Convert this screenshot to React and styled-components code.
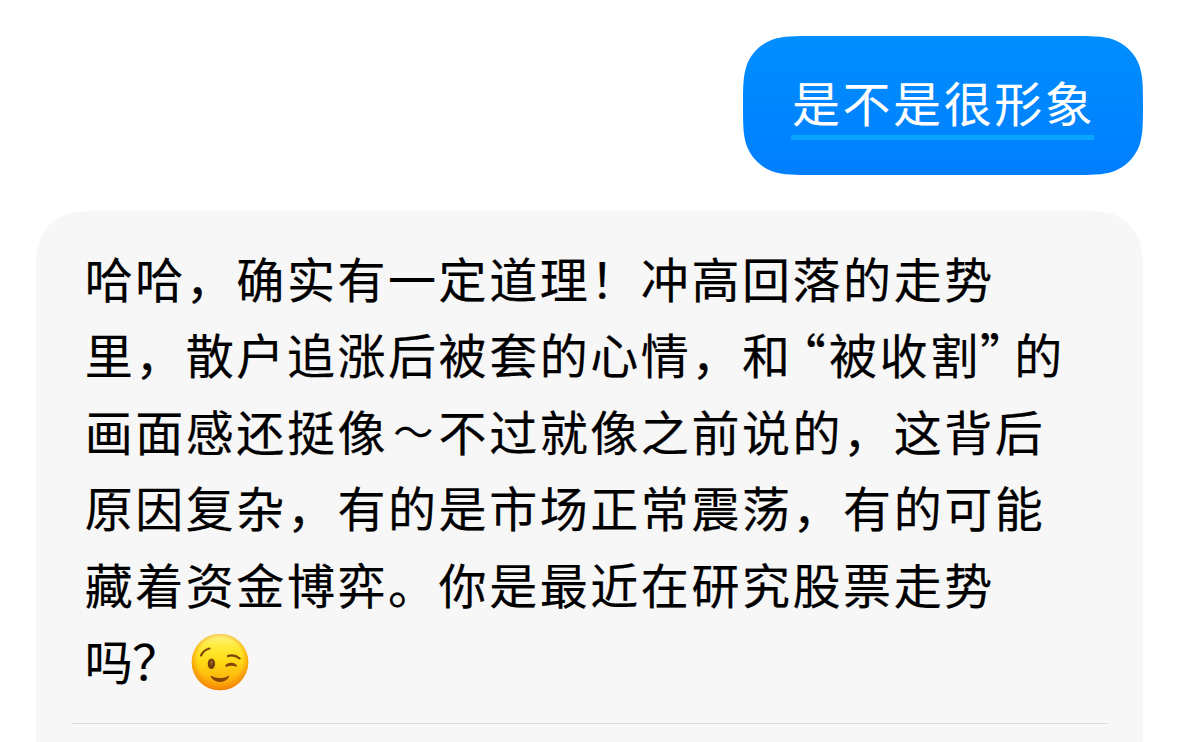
import React from "react";
import styled, { createGlobalStyle } from "styled-components";

const GlobalStyle = createGlobalStyle`
  * {
    box-sizing: border-box;
  }

  body {
    margin: 0;
    background: #ffffff;
    overflow: hidden;
  }
`;

// continuous corner, measured from the corner point in units of the radius
const corner = (r, x, y, sx, sy) => {
  const p = (a, b) => `${(x + sx * a * r).toFixed(2)} ${(y + sy * b * r).toFixed(2)}`;
  return [
    [p(1.5287, 0)],
    [p(1.0885, 0), p(0.8684, 0), p(0.6315, 0.0749)],
    [p(0.3728, 0.1691), p(0.1691, 0.3728), p(0.0749, 0.6315)],
    [p(0, 0.8684), p(0, 1.0885), p(0, 1.5287)],
  ];
};

const backwards = (c) => [
  [c[3][2]],
  [c[3][1], c[3][0], c[2][2]],
  [c[2][1], c[2][0], c[1][2]],
  [c[1][1], c[1][0], c[0][0]],
];

const smoothRect = (w, h, r) => {
  const corners = [
    backwards(corner(r, 0, 0, 1, 1)),
    corner(r, w, 0, -1, 1),
    backwards(corner(r, w, h, -1, -1)),
    corner(r, 0, h, 1, -1),
  ];
  const d = corners
    .map(([start, ...curves]) => `L${start[0]} ${curves.map((c) => `C${c.join(" ")}`).join(" ")}`)
    .join(" ");
  return `M${d.slice(1)} Z`;
};

const Chat = styled.main`
  display: flex;
  flex-direction: column;
  gap: 36px;
  width: 1179px;
  height: 742px;
  padding: 36px 36px 0;
  overflow: hidden;
  background: #ffffff;
  font-family: "Noto Sans CJK SC", sans-serif;
  font-size: 48px;
  letter-spacing: 2.56px;
  font-weight: 400;
  white-space: nowrap;
`;

const UserBubble = styled.div`
  flex: none;
  align-self: flex-end;
  width: 400px;
  height: 139px;
  padding: 27px 0 0 48px;
  color: #ffffff;
  background: linear-gradient(#008eff, #007fff);
  clip-path: path("${smoothRect(400, 139, 47)}");
`;

const Underlined = styled.span`
  display: block;
  width: 303px;
  height: 77px;
  padding-left: 1px;
  line-height: 76px;
  border-bottom: 5px solid #08a4ff;
`;

const ReplyBubble = styled.div`
  flex: none;
  width: 1107px;
  height: 700px;
  padding: 28px 36px 0;
  color: #000000;
  background: #f7f7f7;
  clip-path: path("${smoothRect(1107, 700, 47)}");
  -webkit-text-stroke: 0.2px currentColor;
`;

const ReplyText = styled.div`
  height: 485px;
  padding-left: 12.7px;
  line-height: 76.4px;
  border-bottom: 1px solid #dddddd;
`;

const Line = styled.div`
  display: flex;
  height: 76.4px;
`;

const Quote = styled.span`
  display: flex;
  flex: none;
  width: ${(props) => props.$width}px;
  justify-content: ${(props) => (props.$open ? "flex-end" : "flex-start")};
  letter-spacing: ${(props) => (props.$open ? 4 : 0)}px;
  font-feature-settings: "palt";
`;

const Tilde = styled.span`
  flex: none;
  width: 50.56px;
  font-size: 40px;
  letter-spacing: 0;
  text-align: center;
`;

const QuestionMark = styled.span`
  width: 50.56px;
  margin-left: -3px;
  margin-right: 3px;
`;

const Emoji = styled.svg`
  width: 58px;
  height: 58px;
  margin: 12px 0 0 5.3px;
`;

const Wink = () => (
  <Emoji viewBox="0 0 58 58" role="img" aria-label="😉">
    <defs>
      <linearGradient id="face" x1="0" y1="0" x2="0" y2="1">
        <stop offset="0" stopColor="#fff08a" />
        <stop offset="0.22" stopColor="#ffec3a" />
        <stop offset="0.5" stopColor="#ffd914" />
        <stop offset="0.78" stopColor="#ffb60c" />
        <stop offset="1" stopColor="#fd9a09" />
      </linearGradient>
      <radialGradient id="rim" cx="0.5" cy="0.46" r="0.54">
        <stop offset="0.72" stopColor="#f68a00" stopOpacity="0" />
        <stop offset="1" stopColor="#ee7d05" stopOpacity="0.8" />
      </radialGradient>
    </defs>
    <circle cx="29" cy="29" r="28.3" fill="url(#face)" />
    <circle cx="29" cy="29" r="28.3" fill="url(#rim)" />
    <g fill="none" stroke="#7c4305" strokeLinecap="round">
      <path d="M10 22.4 Q13 16.5 18.5 15.5" strokeWidth="2.2" />
      <path d="M37 23 Q43 20.8 48.7 25.5" strokeWidth="2.2" />
    </g>
    <ellipse cx="20.4" cy="30.7" rx="3.7" ry="5.3" fill="#72400b" />
    <ellipse cx="20.4" cy="29.6" rx="1.5" ry="2.4" fill="#985d1c" />
    <path
      d="M34.3 32.8 C35.5 28.8 44.3 28.5 46 32.6 C46.3 33.8 45 33.9 44 33.3 C41.5 32.5 38.5 32.6 36.2 33.6 C35.2 34 34.2 33.8 34.3 32.8 Z"
      fill="#824708"
    />
    <path
      d="M20.6 43.1 C24.5 45.7 33 45.8 37.2 43 C38.1 42.6 38.5 43.2 37.9 44.2 C34 50.6 23.8 50.6 20 44.3 C19.4 43.2 19.8 42.7 20.6 43.1 Z"
      fill="#844506"
    />
  </Emoji>
);

const App = () => {
  return (
    <>
      <GlobalStyle />
      <Chat>
        <UserBubble>
          <Underlined>是不是很形象</Underlined>
        </UserBubble>
        <ReplyBubble>
          <ReplyText>
            <Line>哈哈，确实有一定道理！冲高回落的走势</Line>
            <Line>
              里，散户追涨后被套的心情，和
              <Quote $open $width={36.5}>“</Quote>
              被收割
              <Quote $width={33.5}>”</Quote>的
            </Line>
            <Line>
              画面感还挺像<Tilde>～</Tilde>不过就像之前说的，这背后
            </Line>
            <Line>原因复杂，有的是市场正常震荡，有的可能</Line>
            <Line>藏着资金博弈。你是最近在研究股票走势</Line>
            <Line>
              吗
              <QuestionMark>？</QuestionMark>
              <Wink />
            </Line>
          </ReplyText>
        </ReplyBubble>
      </Chat>
    </>
  );
};

export default App;
